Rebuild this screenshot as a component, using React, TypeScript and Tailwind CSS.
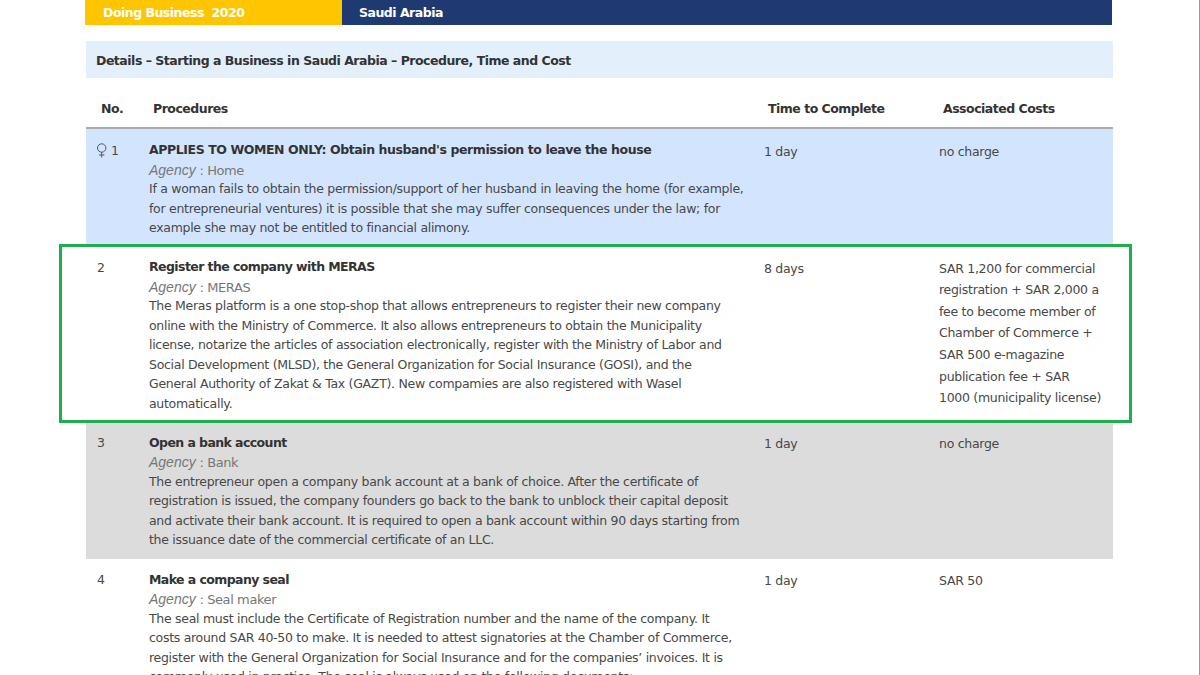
const rows = [
  {
    no: '1',
    female: true,
    bg: 'bg-[#d3e5fe]',
    title: "APPLIES TO WOMEN ONLY: Obtain husband's permission to leave the house",
    agency: 'Home',
    body: [
      'If a woman fails to obtain the permission/support of her husband in leaving the home (for example,',
      'for entrepreneurial ventures) it is possible that she may suffer consequences under the law; for',
      'example she may not be entitled to financial alimony.',
    ],
    time: '1 day',
    cost: ['no charge'],
  },
  {
    no: '2',
    bg: 'bg-white',
    title: 'Register the company with MERAS',
    agency: 'MERAS',
    body: [
      'The Meras platform is a one stop-shop that allows entrepreneurs to register their new company',
      'online with the Ministry of Commerce. It also allows entrepreneurs to obtain the Municipality',
      'license, notarize the articles of association electronically, register with the Ministry of Labor and',
      'Social Development (MLSD), the General Organization for Social Insurance (GOSI), and the',
      'General Authority of Zakat & Tax (GAZT). New compamies are also registered with Wasel',
      'automatically.',
    ],
    time: '8 days',
    cost: [
      'SAR 1,200 for commercial',
      'registration + SAR 2,000 a',
      'fee to become member of',
      'Chamber of Commerce +',
      'SAR 500 e-magazine',
      'publication fee + SAR',
      '1000 (municipality license)',
    ],
  },
  {
    no: '3',
    bg: 'bg-[#dcdcdc]',
    title: 'Open a bank account',
    agency: 'Bank',
    body: [
      'The entrepreneur open a company bank account at a bank of choice. After the certificate of',
      'registration is issued, the company founders go back to the bank to unblock their capital deposit',
      'and activate their bank account. It is required to open a bank account within 90 days starting from',
      'the issuance date of the commercial certificate of an LLC.',
    ],
    time: '1 day',
    cost: ['no charge'],
  },
  {
    no: '4',
    bg: 'bg-white',
    title: 'Make a company seal',
    agency: 'Seal maker',
    body: [
      'The seal must include the Certificate of Registration number and the name of the company. It',
      'costs around SAR 40-50 to make. It is needed to attest signatories at the Chamber of Commerce,',
      'register with the General Organization for Social Insurance and for the companies’ invoices. It is',
      'commonly used in practice. The seal is always used on the following documents:',
    ],
    time: '1 day',
    cost: ['SAR 50'],
  },
]

const FemaleIcon = () => (
  <svg width="11" height="15" viewBox="0 0 11 15" fill="none" stroke="#555" strokeWidth="1" className="mr-[3px] mt-[2px]">
    <circle cx="4.7" cy="5" r="4.2" />
    <path d="M4.7 9.2v5.3M2 12h5.4" />
  </svg>
)

export default function App() {
  return (
    <div className="relative h-[675px] overflow-hidden border-r border-[#999] bg-white font-['DejaVu_Sans',sans-serif] text-[12.5px] tracking-[-0.29px] text-[#484848]">
      <div className="ml-[85px] flex h-[25px] w-[1027px] font-bold leading-[26px] tracking-[-0.5px] text-white">
        <div className="w-[257px] bg-[#ffc600] pl-[18px] whitespace-pre">Doing Business  2020</div>
        <div className="flex-1 bg-[#1f3a70] pl-[17px]">Saudi Arabia</div>
      </div>

      <div className="ml-[86px] mt-[16px] w-[1027px]">
        <div className="flex h-[37px] items-center bg-[#e3f0fb] pl-[10px] pt-[4px] font-bold tracking-[-0.49px] text-[#333]">
          Details – Starting a Business in Saudi Arabia – Procedure, Time and Cost
        </div>

        <div className="grid h-[51px] grid-cols-[63px_615px_175px_174px] items-center border-b-2 border-[#aaa] pt-[14px] font-bold tracking-[-0.5px] text-[#333]">
          <div className="pl-[15px]">No.</div>
          <div className="pl-[4px]">Procedures</div>
          <div className="pl-[4px]">Time to Complete</div>
          <div className="pl-[4px]">Associated Costs</div>
        </div>

        {rows.map((row) => (
          <div key={row.no} className={`grid grid-cols-[63px_615px_175px_174px] pt-[10px] pb-[8.7px] leading-[19.5px] ${row.bg}`}>
            <div className="flex items-start pl-[11px] pt-[1.5px]">
              {row.female && <FemaleIcon />}
              <span>{row.no}</span>
            </div>
            <div>
              <div className={`font-bold leading-[22.5px] text-[#333] ${row.female ? 'tracking-[-0.42px]' : 'tracking-[-0.58px]'}`}>
                {row.title}
              </div>
              <div className="text-[13px] leading-[16.5px] tracking-[-0.4px] text-[#777]">
                <em className="font-['Liberation_Sans',sans-serif] text-[14px] tracking-normal">Agency</em> : {row.agency}
              </div>
              {row.body.map((line) => (
                <div key={line} className="whitespace-nowrap">{line}</div>
              ))}
            </div>
            <div className="pt-[1.5px] leading-[21.6px]">{row.time}</div>
            <div className="pt-[1.5px] leading-[21.6px]">
              {row.cost.map((line) => (
                <div key={line} className="whitespace-nowrap">{line}</div>
              ))}
            </div>
          </div>
        ))}
      </div>

      <div className="absolute left-[59px] top-[244px] h-[179px] w-[1073px] border-[3px] border-[#1fae4b]" />
    </div>
  )
}
